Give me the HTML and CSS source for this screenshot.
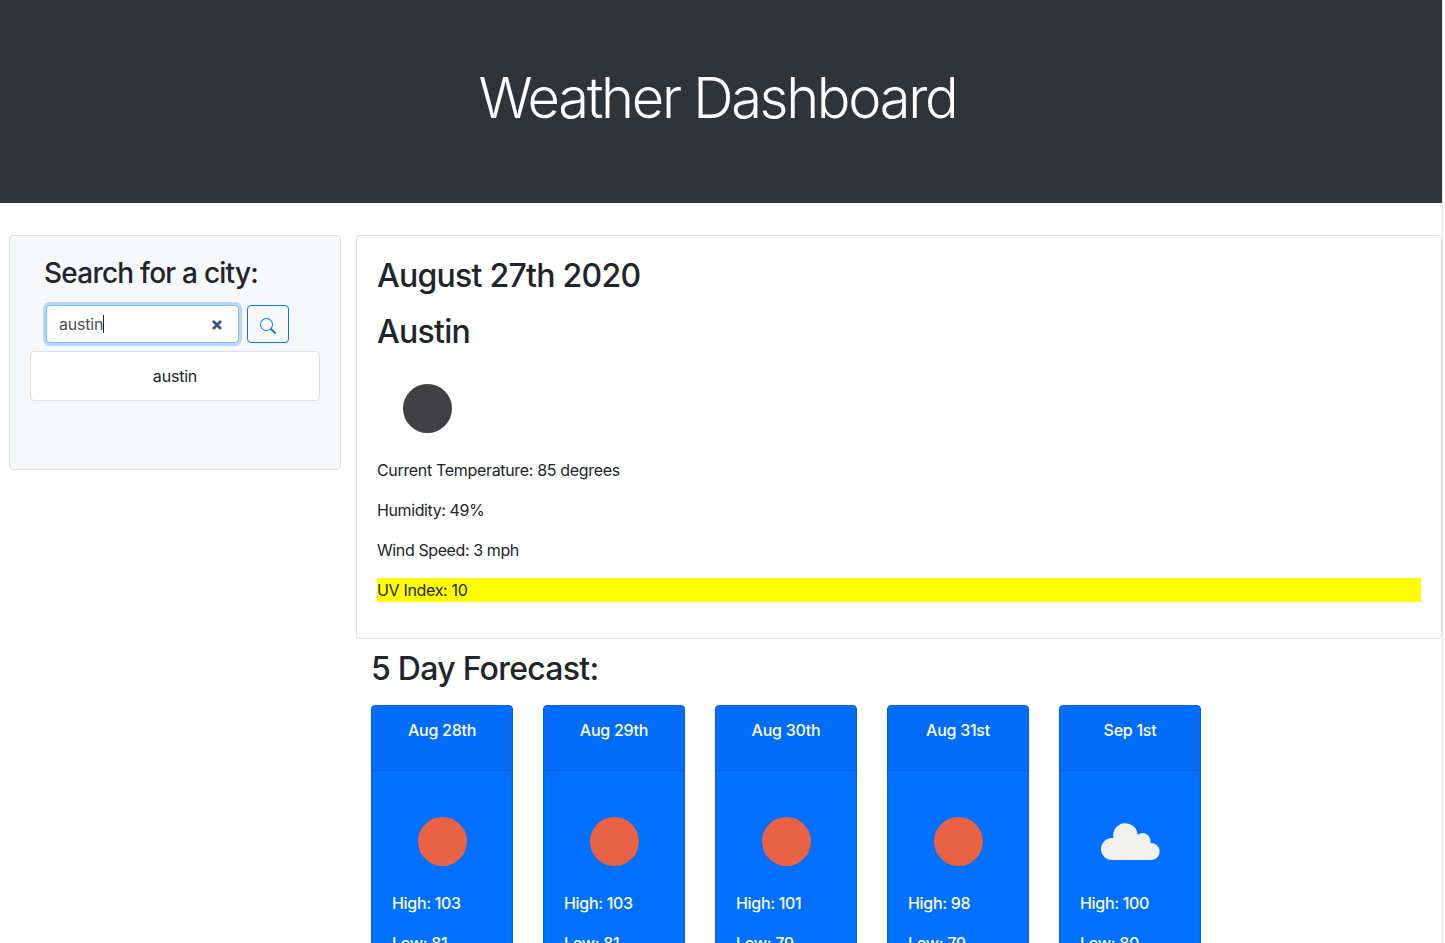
FILE: index.html
```html
<!DOCTYPE html>
<html lang="en">
<head>
<meta charset="utf-8">
<title>Weather Dashboard</title>
<link rel="stylesheet" href="styles.css">
</head>
<body>
<div class="page">
  <header class="banner"><h1 class="banner-title">Weather Dashboard</h1></header>
  <main class="layout">
    <aside class="search card">
      <h3 class="search-title">Search for a city:</h3>
      <form class="search-form">
        <div class="field">
          <span class="field-text">austin</span><span class="caret"></span>
          <svg class="clear" width="12" height="12" viewBox="0 0 12 12"><path d="M2 2l8 8M10 2l-8 8"/></svg>
        </div>
        <button class="search-btn" type="button" aria-label="Search">
          <svg width="16" height="16" viewBox="0 0 16 16" fill="currentColor"><path fill-rule="evenodd" d="M10.442 10.442a1 1 0 0 1 1.415 0l3.85 3.85a1 1 0 0 1-1.414 1.415l-3.85-3.85a1 1 0 0 1 0-1.415z"/><path fill-rule="evenodd" d="M6.5 12a5.5 5.5 0 1 0 0-11 5.5 5.5 0 0 0 0 11zM13 6.5a6.5 6.5 0 1 1-13 0 6.5 6.5 0 0 1 13 0z"/></svg>
        </button>
      </form>
      <div class="history">austin</div>
    </aside>
    <div class="content">
      <section class="current card">
        <h2 class="heading date">August 27th 2020</h2>
        <h2 class="heading city">Austin</h2>
        <div class="icon"><svg width="100" height="100" viewBox="0 0 100 100"><circle cx="50.5" cy="50.5" r="24.5" fill="#404042"/></svg></div>
        <p class="temp">Current Temperature: 85 degrees</p>
        <p class="humidity">Humidity: 49%</p>
        <p class="wind">Wind Speed: 3 mph</p>
        <p class="uv">UV Index: 10</p>
      </section>
      <h2 class="heading forecast-title">5 Day Forecast:</h2>
      <div class="forecast">
        <article class="day"><div class="day-head">Aug 28th</div><div class="day-body"><svg class="day-icon" width="100" height="100" viewBox="0 0 100 100"><circle cx="50.5" cy="50.5" r="24.5" fill="#e96244"/></svg><p>High: 103</p><p>Low: 81</p></div></article>
        <article class="day"><div class="day-head">Aug 29th</div><div class="day-body"><svg class="day-icon" width="100" height="100" viewBox="0 0 100 100"><circle cx="50.5" cy="50.5" r="24.5" fill="#e96244"/></svg><p>High: 103</p><p>Low: 81</p></div></article>
        <article class="day"><div class="day-head">Aug 30th</div><div class="day-body"><svg class="day-icon" width="100" height="100" viewBox="0 0 100 100"><circle cx="50.5" cy="50.5" r="24.5" fill="#e96244"/></svg><p>High: 101</p><p>Low: 79</p></div></article>
        <article class="day"><div class="day-head">Aug 31st</div><div class="day-body"><svg class="day-icon" width="100" height="100" viewBox="0 0 100 100"><circle cx="50.5" cy="50.5" r="24.5" fill="#e96244"/></svg><p>High: 98</p><p>Low: 79</p></div></article>
        <article class="day"><div class="day-head">Sep 1st</div><div class="day-body"><svg class="day-icon" width="100" height="100" viewBox="0 0 100 100"><path fill="#f0f0ee" d="M32 69A11 11 0 0 1 32 47Q32.800 46.800 33.500 47A12.200 12.200 0 1 1 57.600 43.800A8 8 0 0 1 70.300 52A8.500 8.500 0 0 1 72 69Z"/></svg><p>High: 100</p><p>Low: 80</p></div></article>
      </div>
    </div>
  </main>
</div>
<div class="scroll-track"></div>
</body>
</html>
```
FILE: styles.css
```css
* { box-sizing: border-box; }
body {
  margin: 0;
  height: 943px;
  overflow: hidden;
  display: flex;
  background: #fff;
  color: #212529;
  font: 400 16px/24px Inter, "Liberation Sans", sans-serif;
  letter-spacing: -0.2px;
}
h1, h2, h3, p { margin: 0; }
svg { display: block; }
.page { width: 1442px; flex: none; }
.scroll-track { width: 3px; background: #f9f9f9; border-left: 1px solid #e6e6e6; }
.banner {
  height: 203px;
  padding: 65px 7px 0 0;
  background: #2f3438;
  color: #fff;
  text-align: center;
}
.banner-title { font-size: 56px; font-weight: 330; line-height: 67px; letter-spacing: -2.3px; }
.layout { display: flex; align-items: flex-start; gap: 15px; padding: 32px 0 0 9px; }
.card { border: 1px solid #dfdfdf; border-radius: 4px; background: #fff; }
.search { width: 332px; height: 235px; padding: 20px; background: #f7f8fa; }
.search-title { padding-left: 14px; font-size: 28px; font-weight: 500; line-height: 34px; letter-spacing: -0.77px; }
.search-form { display: flex; gap: 8px; margin-top: 15px; padding-left: 16px; }
.field {
  display: flex;
  align-items: center;
  width: 193px;
  height: 38px;
  padding: 0 15px 0 12px;
  border: 1px solid #80bdff;
  border-radius: 4px;
  background: #fff;
  color: #495057;
  box-shadow: 0 0 0 3px #b8d6fb;
}
.caret { width: 1px; height: 18px; background: #222; }
.clear { margin: 2px 0 0 auto; fill: none; stroke: #36538f; stroke-width: 2.7; }
.search-btn {
  width: 42px;
  height: 38px;
  padding: 4px 0 0 12px;
  border: 1px solid #0a75f8;
  border-radius: 4px;
  background: transparent;
  color: #0a75f8;
}
.history {
  height: 50px;
  margin-top: 8px;
  border: 1px solid #dfdfdf;
  border-radius: 4px;
  background: #fff;
  text-align: center;
  line-height: 49px;
}
.content { flex: 1; }
.current { height: 404px; padding: 21px 20px 20px; }
.heading { font-size: 32px; font-weight: 500; line-height: 38px; letter-spacing: -0.73px; }
.city { margin-top: 18px; }
.icon { height: 100px; margin-top: 7px; }
.current p { height: 24px; margin-bottom: 16px; letter-spacing: -0.33px; }
.current .humidity, .current .wind { letter-spacing: -0.4px; }
.uv { background: #ff0; }
.forecast-title { padding: 11px 0 0 15px; }
.forecast { display: flex; gap: 30px; padding: 17px 0 0 15px; }
.day {
  width: 142px;
  height: 300px;
  border: 1px solid #0064df;
  border-radius: 4px;
  background: #0070ff;
  color: #fff;
  font-weight: 500;
  overflow: hidden;
}
.day-head {
  height: 65px;
  padding-top: 12px;
  border-bottom: 1px solid #005fdb;
  background: #006cf7;
  text-align: center;
  letter-spacing: -0.25px;
}
.day-body { padding: 20px; letter-spacing: -0.32px; }
.day p { margin-bottom: 16px; }
```
